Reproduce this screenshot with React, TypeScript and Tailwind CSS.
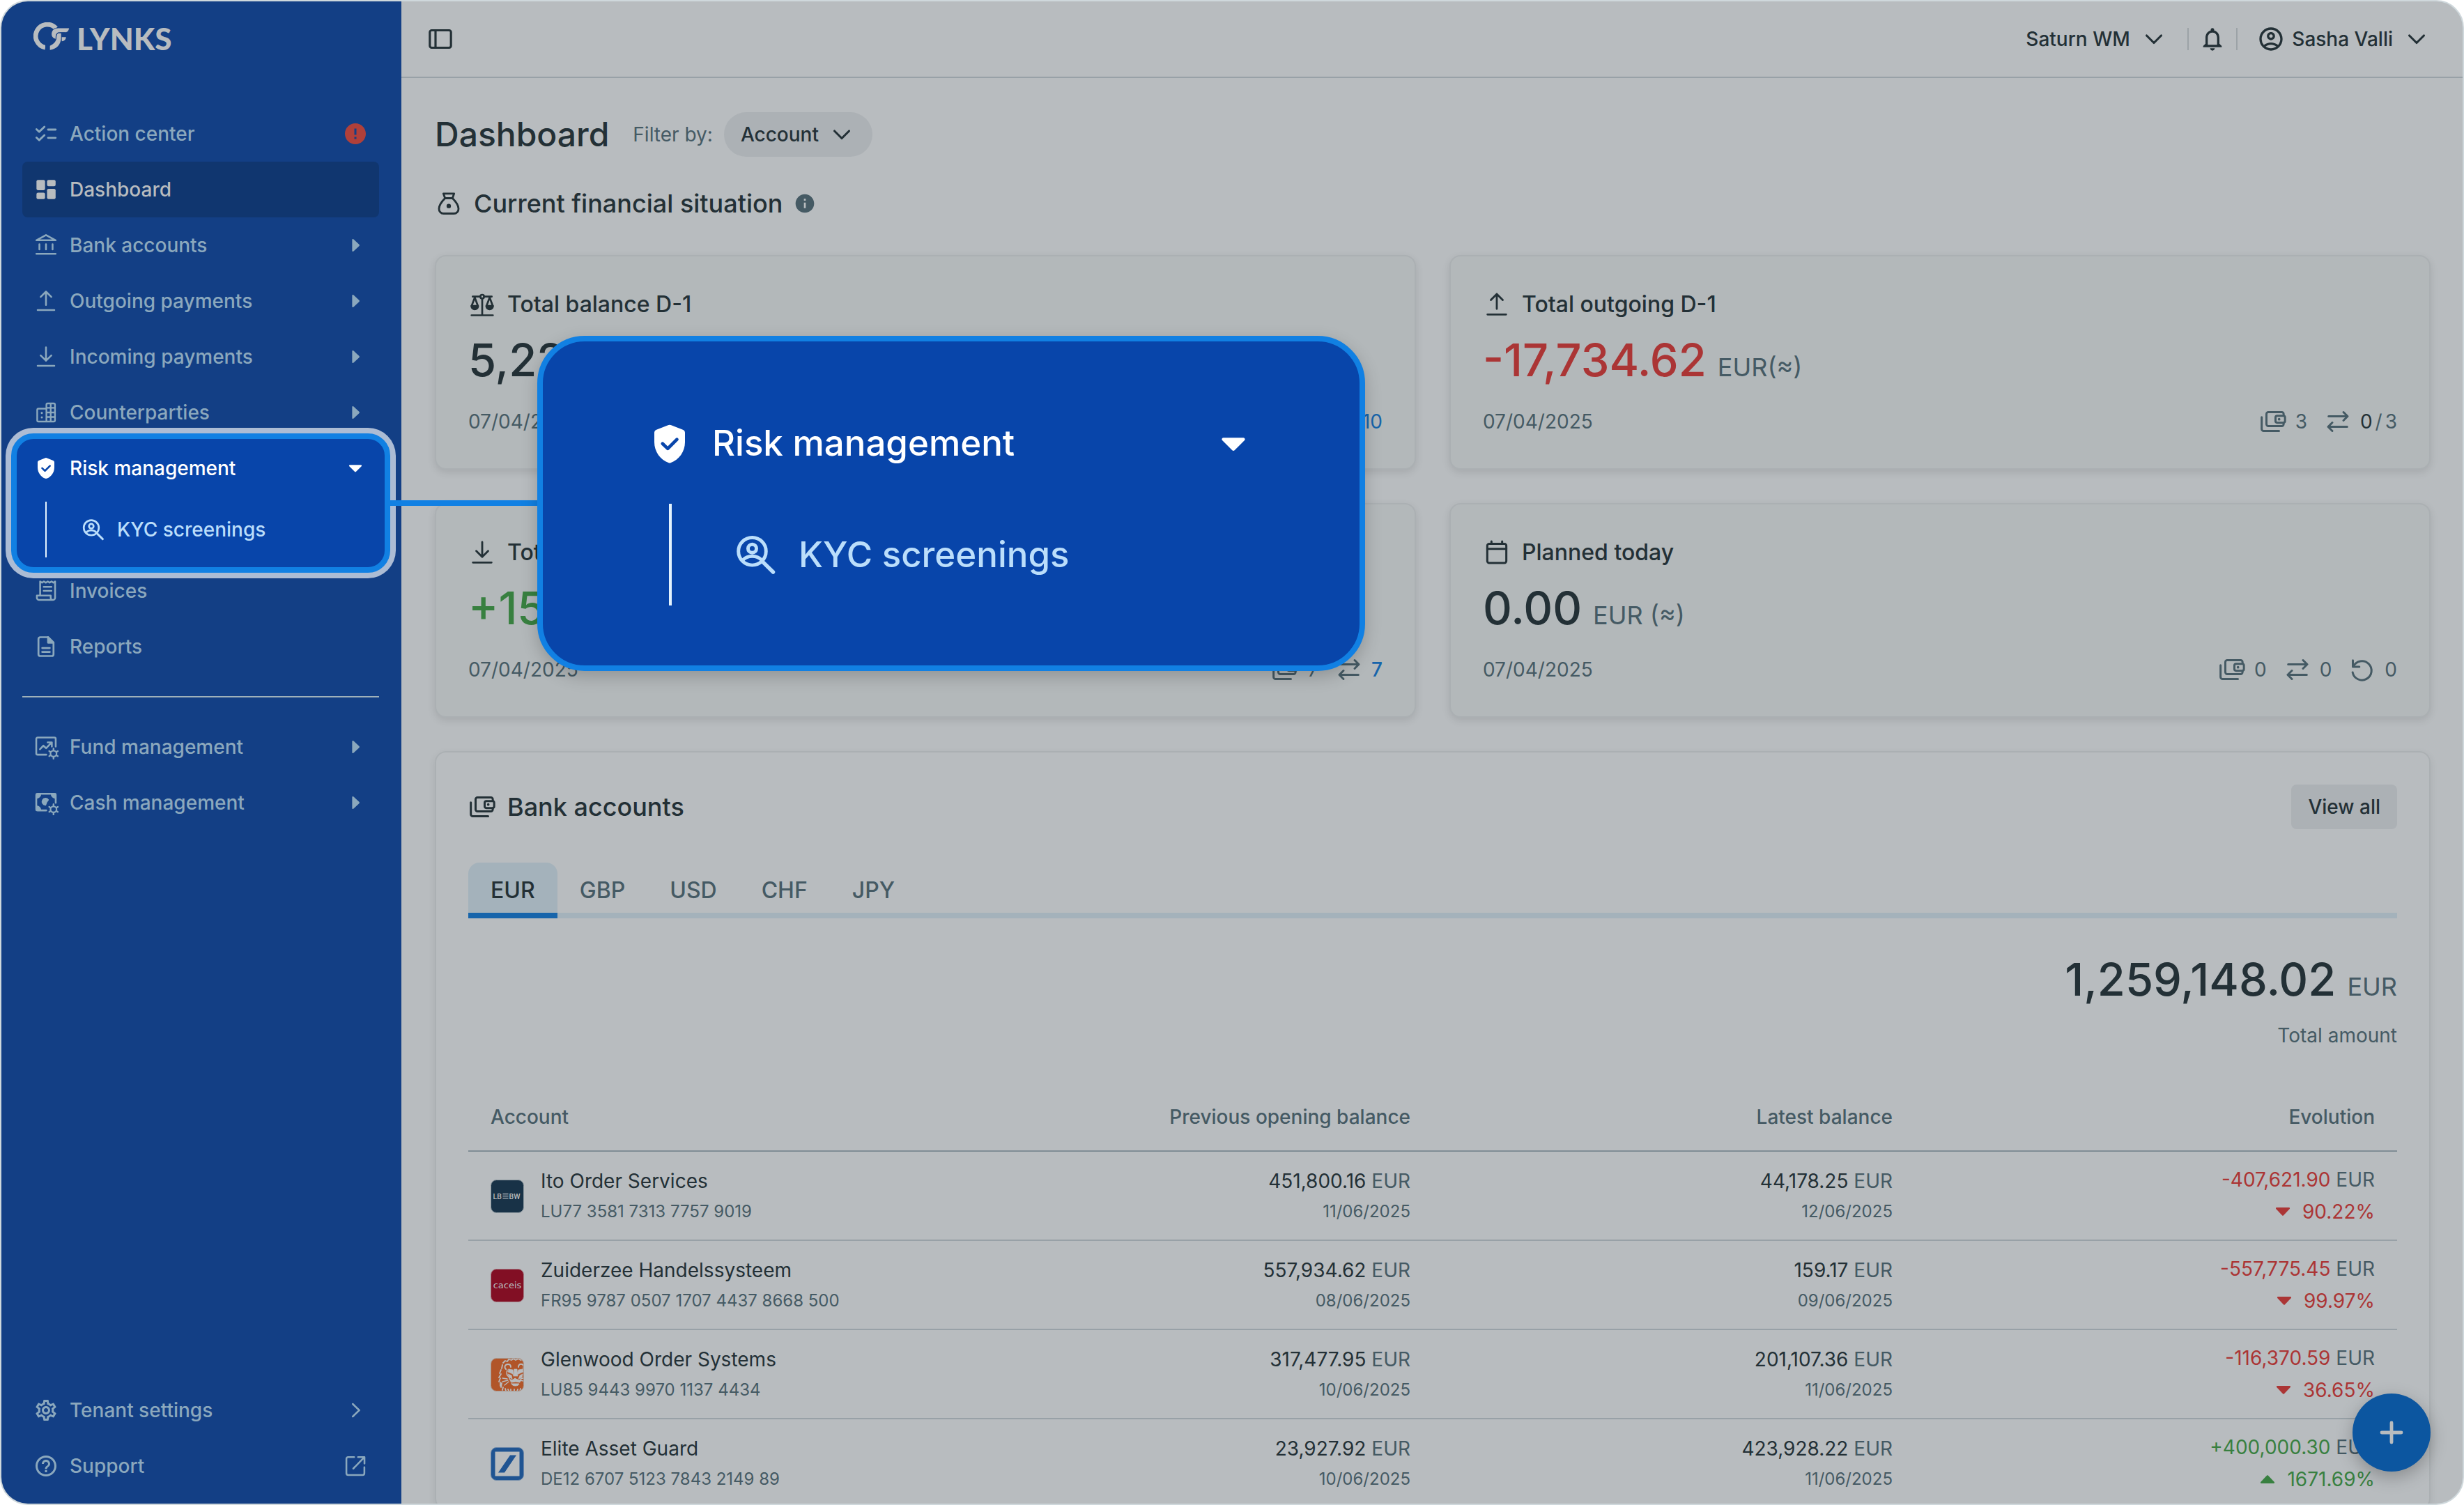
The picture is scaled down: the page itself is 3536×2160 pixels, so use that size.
import type { ReactNode } from "react";
import { MdHelpOutline, MdInfo, MdNotificationsNone, MdOutlineAccountCircle, MdOutlineSettings, MdError } from "react-icons/md";

type IconProps = { className?: string };

function Stroke({ className = "size-9", width = 1.7, children }: { className?: string; width?: number; children: ReactNode }) {
  return (
    <svg
      viewBox="0 0 24 24"
      aria-hidden="true"
      className={`shrink-0 ${className}`}
      fill="none"
      stroke="currentColor"
      strokeWidth={width}
      strokeLinecap="round"
      strokeLinejoin="round"
    >
      {children}
    </svg>
  );
}

const ChecklistIcon = () => (
  <Stroke width={1.9}>
    <path d="M2.9 7.7 5.5 10.100l5-4.800M2.900 15.700 5.500 18.100l5-4.800M14 8h7.200M14 15.900h7.200" />
  </Stroke>
);
const DashboardIcon = () => (
  <svg viewBox="0 0 24 24" aria-hidden="true" className="size-9 shrink-0" fill="currentColor">
    <rect x="2.9" y="2.9" width="8.2" height="9.7" rx="1.5" />
    <rect x="13" y="2.9" width="8.2" height="6" rx="1.5" />
    <rect x="13" y="11.3" width="8.2" height="9.8" rx="1.5" />
    <rect x="2.9" y="15" width="8.2" height="6.1" rx="1.5" />
  </svg>
);
const BankIcon = () => (
  <Stroke>
    <path d="M2.8 7.2 12 2.2l9.2 5zM5.7 11v5M12 11v5M18.3 11v5M2.8 20.2h18.4" />
  </Stroke>
);
const UploadIcon = ({ className }: IconProps) => (
  <Stroke className={className}>
    <path d="M12 3v12.8M6.9 8.1 12 3l5.1 5.1M4 20.6h16" />
  </Stroke>
);
const DownloadIcon = ({ className }: IconProps) => (
  <Stroke className={className}>
    <path d="M12 3v12.8M6.9 10.7l5.1 5.1 5.1-5.1M4 20.6h16" />
  </Stroke>
);
const BuildingIcon = () => (
  <Stroke width={1.6}>
    <path d="M12.4 8.3H4.8a1.2 1.2 0 0 0-1.2 1.2v10a1.2 1.2 0 0 0 1.2 1.2h14.6a1.2 1.2 0 0 0 1.2-1.2v-15a1.2 1.2 0 0 0-1.2-1.2h-5.8a1.2 1.2 0 0 0-1.2 1.2v16.2M16.5 3.4v17.2M12.4 7.6h8.2M12.4 12h8.2M12.4 16.3h8.2" />
    <path d="M8 12.4v.1M8 16.6v.1" strokeWidth="2" />
  </Stroke>
);
const ShieldIcon = ({ className = "size-9" }: IconProps) => (
  <svg viewBox="0 0 24 24" aria-hidden="true" className={`shrink-0 ${className}`}>
    <path
      fill="currentColor"
      d="M11.4 2.2a1.6 1.6 0 0 1 1.2 0l6.3 2.4A1.7 1.7 0 0 1 20 6.2v4.9c0 5-3.1 9.3-7.5 10.8a1.6 1.6 0 0 1-1 0C7.1 20.4 4 16.1 4 11.1V6.2a1.7 1.7 0 0 1 1.1-1.6z"
    />
    <path d="m8.3 11.9 2.7 2.6 4.8-4.8" fill="none" stroke="#0845aa" strokeWidth="1.7" strokeLinecap="round" strokeLinejoin="round" />
  </svg>
);
const PersonSearchIcon = ({ className }: IconProps) => (
  <Stroke className={className} width={1.8}>
    <circle cx="10" cy="10.3" r="7.2" />
    <path d="m15.3 15.6 5.6 5.5" strokeWidth="2" />
    <circle cx="10" cy="8.8" r="2.2" />
    <path d="M5 14.9c1.3-1.4 3-2.1 5-2.1s3.7.7 5 2.1" />
  </Stroke>
);
const ReceiptIcon = () => (
  <Stroke width={1.7}>
    <path d="M6.4 16.5V3l1.8 1.2L10 3l1.9 1.2L13.700 3l1.800 1.200L17.300 3l1.700 1.200L20.700 3v15.600a2.100 2.100 0 0 1-2.100 2.100H5.400a2.100 2.100 0 0 1-2.100-2.100v-2.100h13.200v2.100a2.100 2.100 0 0 0 2.100 2.100M9.800 8.200h7.400M9.800 12h7.400" />
  </Stroke>
);
const DocumentIcon = () => (
  <Stroke width={1.8}>
    <path d="M14 3H6.500A1.700 1.700 0 0 0 4.800 4.700v14.600A1.700 1.700 0 0 0 6.500 21h11a1.700 1.700 0 0 0 1.700-1.700V8.200zM8.400 13.400h7.200M8.400 17.100h7.200" />
    <path d="M14 3v5.200h5.200z" fill="currentColor" />
  </Stroke>
);
const SmallGear = () => (
  <>
    <circle cx="19.200" cy="18.400" r="2.900" strokeWidth="1.500" />
    <path strokeWidth="1.600" d="M19.200 15.200v-1.700M19.200 23.300v-1.700M22 16.800l1.300-.8M15.100 20.800l1.300-.8M22 20l1.300.8M15.100 16l1.300.8" />
  </>
);
const FundIcon = () => (
  <Stroke>
    <path d="M12.300 19.400H4a1.300 1.300 0 0 1-1.300-1.300V4.300A1.300 1.300 0 0 1 4 3h16a1.300 1.300 0 0 1 1.300 1.300v7.400M6.200 14.200l3.300-3.400 2.600 2.400 4.800-4.900M13.600 7.700h4v4" />
    <SmallGear />
  </Stroke>
);
const CashIcon = () => (
  <Stroke>
    <path d="M12.300 19.400H4a1.300 1.300 0 0 1-1.300-1.300V4.800A1.300 1.300 0 0 1 4 3.500h16a1.300 1.300 0 0 1 1.300 1.300v7.400" />
    <path d="M2.700 7.800V3.500H7a4.300 4.300 0 0 1-4.300 4.300zM21.300 7.800V3.500H17a4.300 4.300 0 0 0 4.300 4.300zM2.700 15.100v4.300H7a4.300 4.300 0 0 0-4.300-4.300z" fill="currentColor" strokeWidth="1" />
    <path d="M14.200 9.300a3.200 3.200 0 1 0-2.600 5l1-2.700z" fill="currentColor" strokeWidth="1" />
    <SmallGear />
  </Stroke>
);
const OpenIcon = () => (
  <Stroke>
    <path d="M10.800 3.500H5a1.600 1.600 0 0 0-1.600 1.600V19A1.600 1.600 0 0 0 5 20.600h14a1.600 1.600 0 0 0 1.600-1.600v-5.800M14.500 3.500h6.200v6.200M20.400 3.800 10 14.500" />
  </Stroke>
);
const ChevronRightIcon = () => (
  <Stroke>
    <path d="m9.500 6 6.200 6-6.200 6" />
  </Stroke>
);
const ChevronDownIcon = ({ className = "size-10" }: IconProps) => (
  <Stroke className={className} width={1.9}>
    <path d="m5.700 9 6.300 6.300L18.300 9" />
  </Stroke>
);
const TriangleRight = () => (
  <svg viewBox="0 0 24 24" aria-hidden="true" className="size-9 shrink-0" fill="currentColor">
    <path d="M8.900 6.700c0-.7.800-1 1.200-.6l5.600 5.300c.3.300.3.900 0 1.200l-5.600 5.300c-.4.400-1.200.1-1.200-.6z" />
  </svg>
);
const TriangleDown = ({ className = "size-9" }: IconProps) => (
  <svg viewBox="0 0 24 24" aria-hidden="true" className={`shrink-0 ${className}`} fill="currentColor">
    <path d="M6.800 8.800h10.400c.8 0 1.100.9.600 1.400l-5.200 5.200c-.3.300-.9.300-1.200 0l-5.200-5.200c-.5-.5-.2-1.400.6-1.400z" />
  </svg>
);
const TrendArrow = ({ up }: { up?: boolean }) => (
  <svg viewBox="0 0 24 24" aria-hidden="true" className="size-12 shrink-0" fill="currentColor">
    <path
      d={
        up
          ? "M7.500 15h9c.5 0 .7-.6.400-1l-4.500-4.700a.6.600 0 0 0-.8 0L7.100 14c-.3.400-.1 1 .4 1z"
          : "M7.500 9h9c.5 0 .7.600.4 1l-4.500 4.700a.6.600 0 0 1-.8 0L7.100 10c-.3-.4-.1-1 .4-1z"
      }
    />
  </svg>
);
const PanelIcon = () => (
  <Stroke className="size-10" width={1.9}>
    <rect x="2.900" y="4.500" width="18.200" height="15" rx="1.600" />
    <path d="M7.800 4.500v15" />
  </Stroke>
);
const MoneyBagIcon = () => (
  <Stroke className="size-10">
    <path d="M7.400 3.500h9.200l-1.400 4H8.800zM8.800 7.500c-2.600 2.600-5.200 6-5.200 9a4 4 0 0 0 4 4.200h8.800a4 4 0 0 0 4-4.200c0-3-2.600-6.400-5.200-9" />
    <circle cx="12" cy="14.200" r="1.900" fill="currentColor" stroke="none" />
  </Stroke>
);
const ScalesIcon = () => (
  <Stroke className="size-10" width={1.6}>
    <circle cx="12" cy="5.200" r="1.600" />
    <path d="M3.800 5.200h6.600M13.600 5.200h6.600M12 7v13.500M2.800 21.300h18.400M2.800 13.500 5.600 6l2.800 7.500M15.600 13.500 18.400 6l2.800 7.500" />
    <path d="M2.800 13.200h5.600c0 1.800-1.200 2.900-2.800 2.900s-2.800-1.100-2.800-2.900zM15.600 13.200h5.600c0 1.800-1.200 2.900-2.800 2.900s-2.800-1.100-2.800-2.900z" fill="currentColor" />
  </Stroke>
);
const CalendarIcon = () => (
  <Stroke className="size-10" width={1.8}>
    <rect x="3.800" y="4.500" width="16.400" height="16.500" rx="1.600" />
    <path d="M3.800 8.800h16.400M7.400 2.400v2M16.600 2.400v2" />
  </Stroke>
);
const WalletsIcon = () => (
  <Stroke className="size-10" width={1.8}>
    <path d="M21.100 6.800V5.500a1.600 1.600 0 0 0-1.600-1.600H7.900a1.600 1.600 0 0 0-1.600 1.600v8.800a1.600 1.600 0 0 0 1.600 1.600h11.600a1.600 1.600 0 0 0 1.600-1.600V13M2.200 8.200v10.200a1.700 1.700 0 0 0 1.700 1.700h13.200" />
    <rect x="14.100" y="7" width="8.200" height="6" rx="1.400" />
    <circle cx="17.200" cy="10" r="1.100" fill="currentColor" stroke="none" />
  </Stroke>
);
const TransferIcon = () => (
  <Stroke className="size-10" width={1.8}>
    <path d="M4 7.500h16.200M16.800 3.900l3.600 3.600-3.600 3.600M20 16.500H3.800M7.200 12.900l-3.600 3.600 3.600 3.600" />
  </Stroke>
);
const ReturnIcon = () => (
  <Stroke className="size-10" width={1.8}>
    <path d="M3.900 4v5.600h5.600M4.400 9.200a8.200 8.200 0 1 1-.7 5.200" />
  </Stroke>
);

function Logo() {
  return (
    <div className="flex h-10 items-start gap-[10px] text-[#b8bcbf]">
      <svg viewBox="54 36 154 120" className="h-10 w-[52px] shrink-0" aria-hidden="true">
        <path d="M104 144.500A50 50 0 1 1 150 62" fill="none" stroke="currentColor" strokeWidth="20" />
        <path d="M104 130v28h8v-28z" fill="#133f85" />
        <path d="M124 155v-18c15-6 27-17 28-34 0-9 2-17 8-20h12v20c-1 29-19 49-48 52z" fill="currentColor" />
        <path
          d="M208 60c-2 13-7 20-19 20h-24c-12 0-16 9-15 29-11-2-20-10-20-22 0-17 12-27 30-27z"
          fill="currentColor"
          stroke="#133f85"
          strokeWidth="3"
        />
        <path d="M175 100h18c0 10-7 17-18 18z" fill="currentColor" />
      </svg>
      <span className="font-['Lato',sans-serif] text-[44px] leading-[46px] font-black">LYNKS</span>
    </div>
  );
}

function NavItem({ icon, label, trailing, active, open }: { icon: ReactNode; label: string; trailing?: ReactNode; active?: boolean; open?: boolean }) {
  return (
    <a
      href="#"
      aria-current={active ? "page" : undefined}
      className={`flex h-20 items-center gap-4 rounded-lg px-4 text-[28px] font-medium ${
        active ? "bg-[#10366f] text-[#b8bcbf]" : open ? "text-white" : "text-[#8ba8bd]"
      }`}
    >
      {icon}
      <span className="flex-1">{label}</span>
      {trailing}
    </a>
  );
}

function Sidebar() {
  return (
    <aside className="flex w-[574px] shrink-0 flex-col bg-[#133f85] pt-[30px] pr-8 pb-[14px] pl-[30px]">
      <div className="h-[120px] pl-4">
        <Logo />
      </div>
      <nav aria-label="Main">
        <NavItem icon={<ChecklistIcon />} label="Action center" trailing={<MdError className="size-9 text-[#b0403a]" />} />
        <NavItem icon={<DashboardIcon />} label="Dashboard" active />
        <NavItem icon={<BankIcon />} label="Bank accounts" trailing={<TriangleRight />} />
        <NavItem icon={<UploadIcon />} label="Outgoing payments" trailing={<TriangleRight />} />
        <NavItem icon={<DownloadIcon />} label="Incoming payments" trailing={<TriangleRight />} />
        <NavItem icon={<BuildingIcon />} label="Counterparties" trailing={<TriangleRight />} />
        <div className="relative z-10 pb-2">
          <div className="absolute -inset-x-4 -top-[10px] -bottom-[14px] rounded-[32px] border-8 border-[#1180e3] bg-[#0845aa] ring-8 ring-white/65" />
          <div className="absolute top-[86px] left-[528px] h-2 w-[216px] bg-[#1180e3]" />
          <div className="relative">
            <NavItem icon={<ShieldIcon />} label="Risk management" open trailing={<TriangleDown />} />
            <div className="mt-2 ml-[33px] border-l-2 border-[#e3f2fd] pl-[49px]">
              <a href="#" className="flex h-20 items-center gap-4 text-[28px] font-medium text-[#bbdefb]">
                <PersonSearchIcon />
                KYC screenings
              </a>
            </div>
          </div>
        </div>
        <NavItem icon={<ReceiptIcon />} label="Invoices" />
        <NavItem icon={<DocumentIcon />} label="Reports" />
        <hr className="my-[31px] border-t-2 border-[#9fb1ba]" />
        <NavItem icon={<FundIcon />} label="Fund management" trailing={<TriangleRight />} />
        <NavItem icon={<CashIcon />} label="Cash management" trailing={<TriangleRight />} />
      </nav>
      <div className="mt-auto">
        <NavItem icon={<MdOutlineSettings className="size-9" />} label="Tenant settings" trailing={<ChevronRightIcon />} />
        <NavItem icon={<MdHelpOutline className="size-9" />} label="Support" trailing={<OpenIcon />} />
      </div>
    </aside>
  );
}

function TopBar() {
  return (
    <header className="flex h-[110px] shrink-0 items-center justify-between border-b-2 border-[#98a1a7] pr-[46px] pl-9">
      <button type="button" aria-label="Toggle sidebar">
        <PanelIcon />
      </button>
      <div className="flex items-center text-[28px] font-medium">
        <div className="relative flex items-center">
          <select aria-label="Workspace" className="appearance-none bg-transparent pr-[54px]">
            <option>Saturn WM</option>
          </select>
          <ChevronDownIcon className="pointer-events-none absolute right-0 size-10" />
        </div>
        <div className="mr-[14px] ml-7 h-8 w-0.5 bg-[#9ca3a7]" />
        <button type="button" aria-label="Notifications">
          <MdNotificationsNone className="size-10" />
        </button>
        <div className="mr-7 ml-[14px] h-8 w-0.5 bg-[#9ca3a7]" />
        <button type="button" className="flex items-center">
          <MdOutlineAccountCircle className="size-10" />
          <span className="mr-[14px] ml-[10px]">Sasha Valli</span>
          <ChevronDownIcon />
        </button>
      </div>
    </header>
  );
}

function StatCard({ icon, title, amount, tone, unit, children }: { icon: ReactNode; title: string; amount: string; tone: string; unit: string; children: ReactNode }) {
  return (
    <section className="rounded-2xl border-2 border-[#abb0b3] bg-[#b3b8ba] px-[46px] pt-[45px] pb-[47px] shadow-[0_4px_12px_rgba(0,0,0,0.1)]">
      <h3 className="flex h-12 items-center gap-4 text-[32px] font-medium">
        {icon}
        {title}
      </h3>
      <p className="mt-4 flex h-20 items-baseline gap-4 leading-[80px]">
        <span className={`text-[65px] font-medium ${tone}`}>{amount}</span>
        <span className="text-4xl leading-none text-[#455a64]">{unit}</span>
      </p>
      <div className="mt-7 flex h-10 items-center justify-between text-[28px] text-[#455a64]">
        <time>07/04/2025</time>
        <div className="flex items-center gap-6">{children}</div>
      </div>
    </section>
  );
}

function Count({ icon, children }: { icon: ReactNode; children: ReactNode }) {
  return (
    <span className="flex items-center gap-3">
      {icon}
      <span className="flex gap-1">{children}</span>
    </span>
  );
}

const LbbwLogo = () => (
  <svg viewBox="0 0 48 48" className="size-12" role="img" aria-label="LBBW">
    <rect x="0.500" y="0.500" width="47" height="47" rx="8" fill="#183247" stroke="#8d999f" />
    <g fill="#b8bcbf" fontFamily="Roboto, sans-serif" fontWeight="500" fontSize="10.500">
      <text x="3.500" y="27.500">LB</text>
      <text x="26.500" y="27.500">BW</text>
    </g>
    <path d="M17.500 20.700h8M17.500 23.700h8M17.500 26.700h8" stroke="#b8bcbf" strokeWidth="1.200" />
  </svg>
);
const CaceisLogo = () => (
  <svg viewBox="0 0 48 48" className="size-12" role="img" aria-label="caceis">
    <rect x="0.500" y="0.500" width="47" height="47" rx="8" fill="#820f24" stroke="#a37b83" />
    <text x="24" y="27.500" textAnchor="middle" fill="#b8bcbf" fontFamily="DejaVu Sans, sans-serif" fontSize="13">
      caceis
    </text>
  </svg>
);
const LionLogo = () => (
  <svg viewBox="0 0 48 48" className="size-12" role="img" aria-label="ING">
    <defs>
      <clipPath id="lion-tile">
        <rect x="1" y="1" width="46" height="46" rx="7.500" />
      </clipPath>
    </defs>
    <rect x="0.500" y="0.500" width="47" height="47" rx="8" fill="#b15529" stroke="#a9988f" />
    <g clipPath="url(#lion-tile)" fill="none" stroke="#b8bcbf" strokeLinecap="round" strokeLinejoin="round">
      <path
        strokeWidth="1.800"
        d="M18 7l3-3 3 1 2-3 4 1 3-2 3 2 4-2 3 2 4-1M17 10l-1 5M15 17l-2 5M15 23l-3 5M14 29l-2 5M14 35v5M16 36l-1 6M18 42l-1 4M21 44l1 3M25 45l1 2M29 45v2M34 45v3M39 45l-1 3M43 44l-1 4"
      />
      <path strokeWidth="1.900" d="M22 16c-3-3-1-7 3-7 3 0 4 2 4 4M40 13c0-3 2-5 5-4 3 1 3 4 2 6" />
      <path strokeWidth="1.300" d="M24 17c-2 5-1 8 2 10l2 4M24 30l-7-1M25 32l-8 2M26 34l-6 5M47 29l-4 1M47 33l-5-1" />
      <path d="m26 16 6 1 1 7-3-2-5-2zM46 16l-6 1-2 7 4-2 5-2zM34 16h4l1 10h-6zM25 23l5 2 1 5-4-2zM46 23l-4 2-2 5 5-2z" fill="#b8bcbf" strokeWidth=".7" />
      <path d="M28 31c3 1 5 0 7-2 3 2 5 3 9 2l-2 4-6-1-6 1zM30 37h11c-1 4-10 4-11 0z" fill="#b8bcbf" strokeWidth="1" />
    </g>
  </svg>
);
const SlashLogo = () => (
  <svg viewBox="0 0 48 48" className="size-12" role="img" aria-label="Deutsche Bank">
    <rect x="0.500" y="0.500" width="47" height="47" rx="8" fill="#1f5492" stroke="#6d88a8" />
    <path d="M6.500 6.500h35v35h-35z" fill="#b8bcbf" />
    <path d="M28 11.500h9L20 36.500h-9z" fill="#1f5492" />
  </svg>
);

const ROWS = [
  { logo: <LbbwLogo />, name: "Ito Order Services", iban: "LU77 3581 7313 7757 9019", prev: "451,800.16", prevDate: "11/06/2025", last: "44,178.25", lastDate: "12/06/2025", diff: "-407,621.90", pct: "90.22%", up: false },
  { logo: <CaceisLogo />, name: "Zuiderzee Handelssysteem", iban: "FR95 9787 0507 1707 4437 8668 500", prev: "557,934.62", prevDate: "08/06/2025", last: "159.17", lastDate: "09/06/2025", diff: "-557,775.45", pct: "99.97%", up: false },
  { logo: <LionLogo />, name: "Glenwood Order Systems", iban: "LU85 9443 9970 1137 4434", prev: "317,477.95", prevDate: "10/06/2025", last: "201,107.36", lastDate: "11/06/2025", diff: "-116,370.59", pct: "36.65%", up: false },
  { logo: <SlashLogo />, name: "Elite Asset Guard", iban: "DE12 6707 5123 7843 2149 89", prev: "23,927.92", prevDate: "10/06/2025", last: "423,928.22", lastDate: "11/06/2025", diff: "+400,000.30", pct: "1671.69%", up: true },
];

function Balance({ amount, date }: { amount: string; date: string }) {
  return (
    <td className="px-8 pt-5 pb-[18px] text-right align-top">
      <div className="text-[28px] leading-[44px]">
        {amount} <span className="text-[#455a64]">EUR</span>
      </div>
      <div className="text-2xl leading-[44px] text-[#455a64]">{date}</div>
    </td>
  );
}

function BankAccounts() {
  return (
    <section className="mt-12 rounded-2xl border-2 border-[#abb0b3] px-[46px] pt-[46px] shadow-[0_4px_12px_rgba(0,0,0,0.08)]">
      <div className="flex h-16 items-center justify-between">
        <h2 className="flex items-center gap-4 text-4xl font-medium">
          <WalletsIcon />
          Bank accounts
        </h2>
        <button type="button" className="h-16 rounded-lg bg-[#acb1b5] px-6 text-[28px] font-medium">
          View all
        </button>
      </div>
      <div role="tablist" className="mt-12 flex h-20 text-[32px] font-medium">
        {["EUR", "GBP", "USD", "CHF", "JPY"].map((code, i) => (
          <button
            key={code}
            type="button"
            role="tab"
            aria-selected={i === 0}
            className={`border-b-8 px-8 pt-2 ${i === 0 ? "rounded-t-2xl border-[#1765ab] bg-[#a4b2bb]" : "border-[#a4b2bb] text-[#455a64]"}`}
          >
            {code}
          </button>
        ))}
        <div className="flex-1 border-b-8 border-[#a4b2bb]" />
      </div>
      <div className="mt-12 text-right">
        <p className="flex h-20 items-baseline justify-end gap-4 leading-[80px]">
          <span className="text-[65px] font-medium">1,259,148.02</span>
          <span className="text-4xl leading-none text-[#455a64]">EUR</span>
        </p>
        <p className="mt-5 text-[28px] leading-10 text-[#455a64]">Total amount</p>
      </div>
      <table className="mt-12 w-full table-fixed border-collapse">
        <thead>
          <tr className="h-[98px] border-b-2 border-[#808d95] text-[28px] text-[#455a64]">
            <th className="px-8 text-left font-medium">Account</th>
            <th className="px-8 text-right font-medium">Previous opening balance</th>
            <th className="px-8 text-right font-medium">Latest balance</th>
            <th className="px-8 text-right font-medium">Evolution</th>
          </tr>
        </thead>
        <tbody>
          {ROWS.map((r) => (
            <tr key={r.name} className="h-32 border-b-2 border-[#98a1a7]">
              <td className="px-8 pt-5 pb-[18px] align-top">
                <div className="flex items-center gap-6">
                  {r.logo}
                  <div>
                    <div className="text-[28px] leading-[44px]">{r.name}</div>
                    <div className="text-2xl leading-[44px] text-[#455a64]">{r.iban}</div>
                  </div>
                </div>
              </td>
              <Balance amount={r.prev} date={r.prevDate} />
              <Balance amount={r.last} date={r.lastDate} />
              <td className={`px-8 pt-5 pb-[18px] text-right align-top text-[28px] ${r.up ? "text-[#388040]" : "text-[#ab3535]"}`}>
                <div className="leading-10">
                  {r.diff} <span className="text-[#455a64]">EUR</span>
                </div>
                <div className="mt-1 flex h-11 items-center justify-end gap-1">
                  <TrendArrow up={r.up} />
                  {r.pct}
                </div>
              </td>
            </tr>
          ))}
        </tbody>
      </table>
    </section>
  );
}

function Callout() {
  return (
    <div className="absolute top-[480px] left-[769px] z-20 h-[481px] w-[1188px] rounded-[68px] border-8 border-[#1180e3] bg-[#0845aa] pt-[74px] pr-[120px] pl-[121px] text-[51px] font-medium shadow-[0_8px_24px_rgba(0,0,0,0.2)]">
      <div className="flex h-[145px] items-center gap-7 px-7 text-white">
        <ShieldIcon className="size-[66px]" />
        <span className="flex-1">Risk management</span>
        <TriangleDown className="size-[66px]" />
      </div>
      <div className="mt-[14px] ml-[60px] flex h-[146px] items-center gap-7 border-l-4 border-[#e3f2fd] pl-[88px] text-[#bbdefb]">
        <PersonSearchIcon className="size-[66px]" />
        KYC screenings
      </div>
    </div>
  );
}

export default function App() {
  return (
    <div className="h-screen bg-white font-['Inter',sans-serif] text-[#233036]">
      <div className="relative flex h-full overflow-hidden rounded-[40px] border-2 border-[#cfd8dc] bg-[#b8bcbf]">
        <Sidebar />
        <div className="flex min-w-0 flex-1 flex-col">
          <TopBar />
          <main className="min-h-0 flex-1 overflow-hidden pt-[49px] pr-[46px] pl-12">
            <div className="flex h-16 items-center">
              <h1 className="mr-[34px] text-5xl font-medium">Dashboard</h1>
              <label htmlFor="filter" className="mr-4 text-[28px] text-[#455a64]">
                Filter by:
              </label>
              <div className="relative flex items-center">
                <select id="filter" className="h-16 appearance-none rounded-full bg-[#acb1b5] pr-[76px] pl-6 text-[28px] font-medium">
                  <option>Account</option>
                </select>
                <ChevronDownIcon className="pointer-events-none absolute right-6 size-10" />
              </div>
            </div>
            <h2 className="mt-[47px] flex h-10 items-center gap-4 text-4xl font-medium">
              <MoneyBagIcon />
              Current financial situation
              <MdInfo className="size-8 text-[#455a64]" />
            </h2>
            <div className="mt-[54px] grid grid-cols-2 gap-12">
              <StatCard icon={<ScalesIcon />} title="Total balance D-1" amount="5,223,481.90" tone="" unit="EUR (≈)">
                <Count icon={<WalletsIcon />}>
                  <span className="text-[#1765ab]">10</span>
                </Count>
              </StatCard>
              <StatCard icon={<UploadIcon className="size-10" />} title="Total outgoing D-1" amount="-17,734.62" tone="text-[#ab3535]" unit="EUR(≈)">
                <Count icon={<WalletsIcon />}>3</Count>
                <Count icon={<TransferIcon />}>
                  <span className="text-[#233036]">0</span>
                  <span>/</span>
                  <span>3</span>
                </Count>
              </StatCard>
              <StatCard icon={<DownloadIcon className="size-10" />} title="Total incoming D-1" amount="+15,480.20" tone="text-[#388040]" unit="EUR (≈)">
                <Count icon={<WalletsIcon />}>7</Count>
                <Count icon={<TransferIcon />}>
                  <span className="font-medium text-[#1765ab]">7</span>
                </Count>
              </StatCard>
              <StatCard icon={<CalendarIcon />} title="Planned today" amount="0.00" tone="" unit="EUR (≈)">
                <Count icon={<WalletsIcon />}>0</Count>
                <Count icon={<TransferIcon />}>0</Count>
                <Count icon={<ReturnIcon />}>0</Count>
              </StatCard>
            </div>
            <BankAccounts />
          </main>
        </div>
        <Callout />
        <button
          type="button"
          aria-label="Add"
          className="absolute right-[46px] bottom-[46px] flex size-28 items-center justify-center rounded-full bg-[#0c56a0] text-[#b8bcbf] shadow-[0_8px_24px_rgba(0,0,0,0.25)]"
        >
          <Stroke className="size-12" width={2.4}>
            <path d="M12 5v14M5 12h14" />
          </Stroke>
        </button>
      </div>
    </div>
  );
}
